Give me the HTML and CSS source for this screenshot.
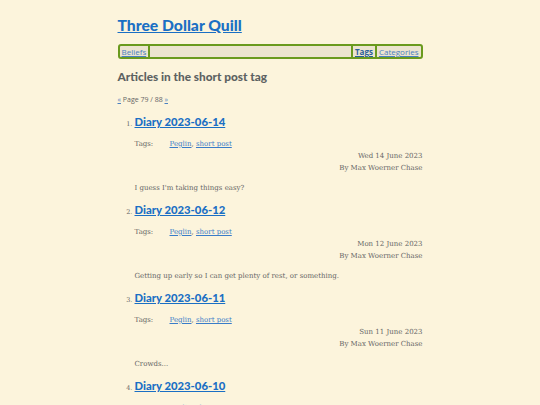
FILE: index.html
```html
<!DOCTYPE html>
<html>
<head>
<meta charset="utf-8">
<link rel="stylesheet" href="styles.css">
</head>
<body>
<div class="page">
  <h1 class="site-title"><a href="#">Three Dollar Quill</a></h1>
  <nav class="nav">
    <a href="#" class="nav-left">Beliefs</a>
    <span class="nav-fill"></span>
    <a href="#" class="nav-item nav-current">Tags</a>
    <a href="#" class="nav-item">Categories</a>
  </nav>
  <h2 class="heading">Articles in the short post tag</h2>
  <p class="pager"><a href="#">«</a> Page 79 / 88 <a href="#">»</a></p>
  <ol class="articles">
    <li class="article">
      <h3 class="article-title"><a href="#">Diary 2023-06-14</a></h3>
      <div class="tags"><span class="tags-label">Tags:</span><span><a href="#">Peglin</a>, <a href="#">short post</a></span></div>
      <div class="meta">Wed 14 June 2023<br>By Max Woerner Chase</div>
      <p class="summary">I guess I'm taking things easy?</p>
    </li>
    <li class="article">
      <h3 class="article-title"><a href="#">Diary 2023-06-12</a></h3>
      <div class="tags"><span class="tags-label">Tags:</span><span><a href="#">Peglin</a>, <a href="#">short post</a></span></div>
      <div class="meta">Mon 12 June 2023<br>By Max Woerner Chase</div>
      <p class="summary">Getting up early so I can get plenty of rest, or something.</p>
    </li>
    <li class="article">
      <h3 class="article-title"><a href="#">Diary 2023-06-11</a></h3>
      <div class="tags"><span class="tags-label">Tags:</span><span><a href="#">Peglin</a>, <a href="#">short post</a></span></div>
      <div class="meta">Sun 11 June 2023<br>By Max Woerner Chase</div>
      <p class="summary">Crowds...</p>
    </li>
    <li class="article">
      <h3 class="article-title"><a href="#">Diary 2023-06-10</a></h3>
      <div class="tags"><span class="tags-label">Tags:</span><span><a href="#">Peglin</a>, <a href="#">short post</a></span></div>
      <div class="meta">Sat 10 June 2023<br>By Max Woerner Chase</div>
      <p class="summary">More.</p>
    </li>
  </ol>
</div>
</body>
</html>
```

FILE: styles.css
```css
html, body {
  margin: 0;
  padding: 0;
  background: #fcf4dc;
}
body {
  font-family: "DejaVu Serif", serif;
  color: #555;
  font-size: 8px;
}
a { color: #1a6fc4; }
.page {
  width: 305px;
  margin: 0 auto;
  padding-top: 14px;
}
.site-title {
  margin: 0;
  font-family: Lato, sans-serif;
  font-size: 15.7px;
  font-weight: 900;
  line-height: 22px;
}
.nav {
  margin-top: 8px;
  display: flex;
  align-items: stretch;
  border: 2px solid #6a9a1e;
  border-radius: 3px;
  background: #ece4cf;
  font-family: "Open Sans", sans-serif;
  font-size: 8px;
  line-height: 11px;
}
.nav a { color: #4a80c0; padding: 0 2px; }
.nav-left { border-right: 2px solid #6a9a1e; }
.nav-fill { flex: 1; }
.nav-item { border-left: 2px solid #6a9a1e; }
.nav-current { font-weight: 700; color: #2a5f9a !important; }
.heading {
  margin: 10px 0 0;
  font-family: Lato, sans-serif;
  font-size: 11.8px;
  font-weight: 900;
  color: #5c6262;
  line-height: 16px;
}
.pager {
  margin: 10px 0 0;
  font-family: "Open Sans", sans-serif;
  font-size: 7px;
  color: #666;
}
.pager a { color: #4a80c0; }
.articles {
  margin: 10px 0 0;
  padding-left: 17px;
  font-size: 6.5px;
}
.article { color: #666; }
.article-title {
  margin: 0;
  font-family: Lato, sans-serif;
  font-size: 11.3px;
  font-weight: 900;
  line-height: 16px;
}
.tags {
  margin-top: 8px;
  display: flex;
  font-size: 7px;
  line-height: 12px;
}
.tags-label { width: 35px; }
.tags a { color: #3a7cc8; }
.meta {
  text-align: right;
  font-size: 7px;
  line-height: 12px;
}
.summary {
  margin: 8px 0 8px;
  font-size: 7px;
  line-height: 12px;
}
```
